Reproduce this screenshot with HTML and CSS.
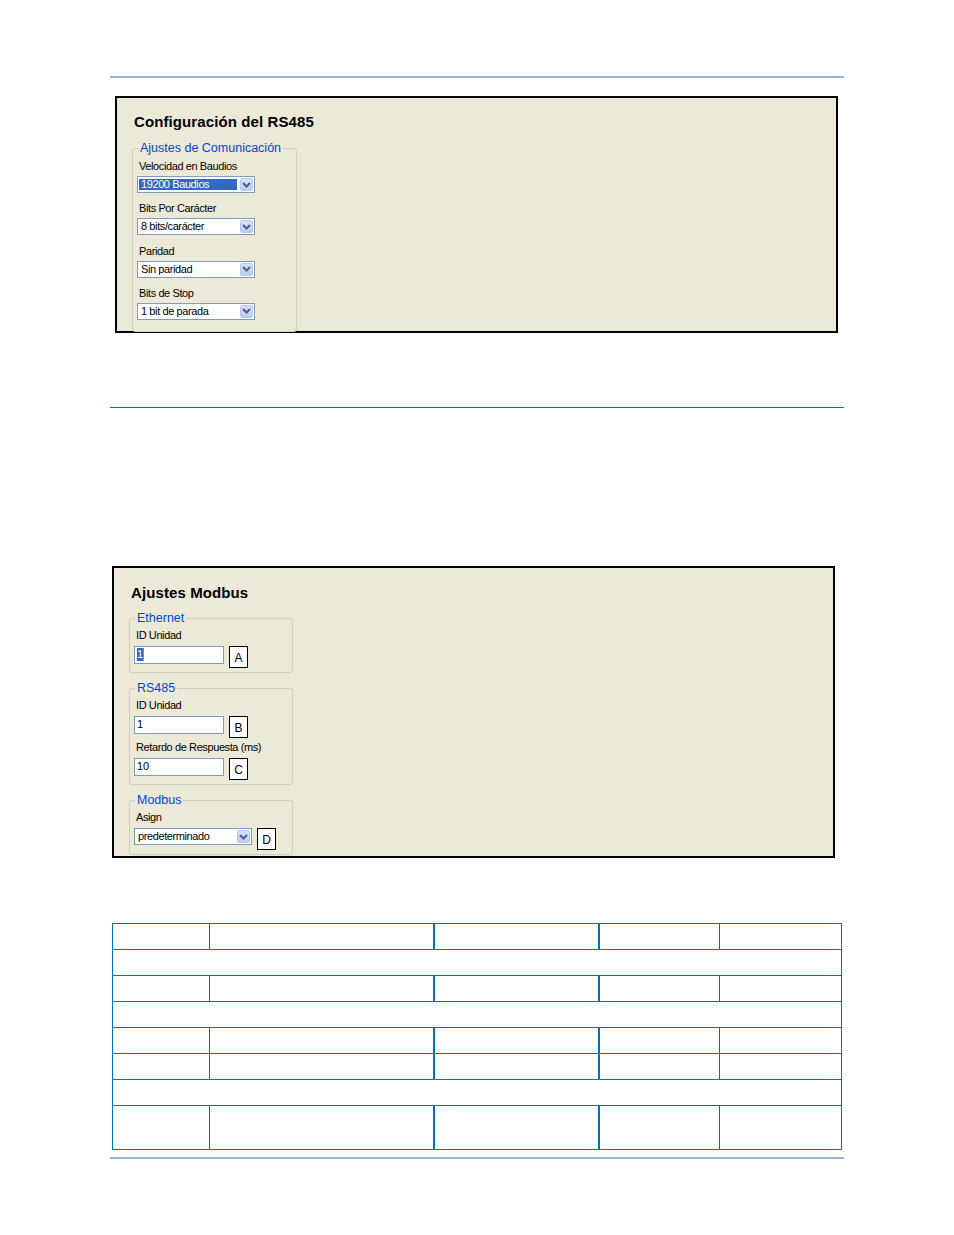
FILE: index.html
```html
<!DOCTYPE html>
<html lang="es">

<head>
    <meta charset="UTF-8">
    <meta name="viewport" content="width=device-width, initial-scale=1.0">
    <title>Configuración</title>
    <link rel="stylesheet" href="styles.css">
</head>

<body>
    <div class="page">
        <div class="rule-top"></div>

        <!-- Configuración del RS485 -->
        <div class="panel panel-rs485">
            <h2 class="panel-title">Configuración del RS485</h2>
            <fieldset class="group group-com">
                <legend>Ajustes de Comunicación</legend>
                <div class="field">
                    <div class="label">Velocidad en Baudios</div>
                    <div class="select">
                        <span class="select-text selected">19200 Baudios</span>
                        <span class="select-btn"><svg width="9" height="6" viewBox="0 0 9 6"><path d="M1 1l3.5 3.5L8 1" fill="none" stroke="#4d6185" stroke-width="2"/></svg></span>
                    </div>
                </div>
                <div class="field">
                    <div class="label">Bits Por Carácter</div>
                    <div class="select">
                        <span class="select-text">8 bits/carácter</span>
                        <span class="select-btn"><svg width="9" height="6" viewBox="0 0 9 6"><path d="M1 1l3.5 3.5L8 1" fill="none" stroke="#4d6185" stroke-width="2"/></svg></span>
                    </div>
                </div>
                <div class="field">
                    <div class="label">Paridad</div>
                    <div class="select">
                        <span class="select-text">Sin paridad</span>
                        <span class="select-btn"><svg width="9" height="6" viewBox="0 0 9 6"><path d="M1 1l3.5 3.5L8 1" fill="none" stroke="#4d6185" stroke-width="2"/></svg></span>
                    </div>
                </div>
                <div class="field last">
                    <div class="label">Bits de Stop</div>
                    <div class="select">
                        <span class="select-text">1 bit de parada</span>
                        <span class="select-btn"><svg width="9" height="6" viewBox="0 0 9 6"><path d="M1 1l3.5 3.5L8 1" fill="none" stroke="#4d6185" stroke-width="2"/></svg></span>
                    </div>
                </div>
            </fieldset>
        </div>

        <div class="rule-mid"></div>

        <!-- Ajustes Modbus -->
        <div class="panel panel-modbus">
            <h2 class="panel-title">Ajustes Modbus</h2>
            <fieldset class="group group-mb">
                <legend>Ethernet</legend>
                <div class="label">ID Unidad</div>
                <div class="row">
                    <div class="input"><span class="caret-sel">1</span></div>
                    <div class="tag">A</div>
                </div>
            </fieldset>
            <fieldset class="group group-mb">
                <legend>RS485</legend>
                <div class="label">ID Unidad</div>
                <div class="row">
                    <div class="input">1</div>
                    <div class="tag">B</div>
                </div>
                <div class="label">Retardo de Respuesta (ms)</div>
                <div class="row">
                    <div class="input">10</div>
                    <div class="tag">C</div>
                </div>
            </fieldset>
            <fieldset class="group group-mb">
                <legend>Modbus</legend>
                <div class="label">Asign</div>
                <div class="row">
                    <div class="select">
                        <span class="select-text">predeterminado</span>
                        <span class="select-btn"><svg width="9" height="6" viewBox="0 0 9 6"><path d="M1 1l3.5 3.5L8 1" fill="none" stroke="#4d6185" stroke-width="2"/></svg></span>
                    </div>
                    <div class="tag">D</div>
                </div>
            </fieldset>
        </div>

        <table class="grid">
            <colgroup>
                <col class="c1">
                <col class="c2">
                <col class="c3">
                <col class="c4">
                <col class="c5">
            </colgroup>
            <tr><td></td><td></td><td class="thick"></td><td class="thick"></td><td></td></tr>
            <tr><td colspan="5"></td></tr>
            <tr><td></td><td></td><td class="thick"></td><td class="thick"></td><td></td></tr>
            <tr><td colspan="5"></td></tr>
            <tr><td></td><td></td><td class="thick"></td><td class="thick"></td><td></td></tr>
            <tr><td></td><td></td><td class="thick"></td><td class="thick"></td><td></td></tr>
            <tr><td colspan="5"></td></tr>
            <tr class="tall"><td></td><td></td><td class="thick"></td><td class="thick"></td><td></td></tr>
        </table>

        <div class="rule-bottom"></div>
    </div>
</body>

</html>
```

FILE: styles.css
```css
body {
    margin: 0;
    background: #fff;
    font-family: "Liberation Sans", Arial, sans-serif;
    color: #000;
}

.page {
    width: 734px;
    margin-left: 110px;
    padding-bottom: 60px;
}

.rule-top,
.rule-bottom {
    height: 2px;
    background: #95b3d7;
}

.rule-top {
    margin-top: 76px;
}

.rule-mid {
    height: 1px;
    background: #0070c0;
    margin-top: 74px;
}

.rule-bottom {
    margin-top: 7px;
}

/* panels */
.panel {
    background: #ece9d8;
    border: 2px solid #000;
    box-sizing: border-box;
    width: 723px;
}

.panel-rs485 {
    margin: 18px 0 0 5px;
    height: 237px;
    padding: 15px 0 0 17px;
}

.panel-modbus {
    margin: 158px 0 0 2px;
    height: 292px;
    padding: 16px 0 0 17px;
}

.panel-title {
    margin: 0;
    font-size: 15px;
    line-height: 18px;
    font-weight: bold;
    letter-spacing: 0.1px;
}

/* group boxes */
.group {
    margin: 0;
    border: 1px solid #d0d0bf;
    border-radius: 3px;
    box-sizing: border-box;
    min-width: 0;
}

.group legend {
    padding: 0 2px;
    margin-left: 1px;
    font-size: 12.5px;
    line-height: 14px;
    color: #0046d5;
}

.group-com {
    width: 165px;
    margin: 10px 0 0 -2px;
    padding: 5px 0 11px 4px;
}

.group-mb {
    width: 164px;
    margin: 8px 0 0 -2px;
    padding: 4px 0 1px 4px;
}

.group-mb:first-of-type {
    margin-top: 9px;
}

.label {
    font-size: 11px;
    line-height: 13px;
    letter-spacing: -0.4px;
    padding-left: 2px;
    margin-bottom: 3px;
}

.group-mb .label {
    margin-bottom: 4px;
}

.field {
    margin-bottom: 9.3px;
}

.field.last {
    margin-bottom: 0;
}

/* combo boxes */
.select {
    display: flex;
    align-items: center;
    width: 118px;
    height: 17px;
    box-sizing: border-box;
    border: 1px solid #7f9db9;
    background: #fff;
    padding: 1px;
}

.select-text {
    flex: 1;
    font-size: 11px;
    line-height: 11px;
    letter-spacing: -0.4px;
    padding: 0 2px;
    margin-right: 3px;
    height: 11px;
    white-space: nowrap;
    overflow: hidden;
}

.select-text.selected {
    background: #316ac5;
    color: #fff;
}

.select-btn {
    width: 13px;
    height: 13px;
    box-sizing: border-box;
    border: 1px solid #b9c9ef;
    border-radius: 2px;
    background: linear-gradient(#d8e2fc, #bccbf4);
    display: flex;
    align-items: center;
    justify-content: center;
}

/* text boxes and tags */
.row {
    display: flex;
    align-items: flex-start;
    gap: 5px;
    margin-bottom: 3px;
}

.input {
    width: 90px;
    height: 18px;
    box-sizing: border-box;
    border: 1px solid #7f9db9;
    background: #fff;
    font-size: 11px;
    line-height: 15px;
    padding-left: 2px;
}

.caret-sel {
    display: inline-block;
    background: #316ac5;
    color: #fff;
    width: 6px;
    line-height: 13px;
    margin-top: 1px;
    border-right: 1px solid #e07a20;
}

.tag {
    width: 19px;
    height: 22px;
    box-sizing: border-box;
    border: 1px solid #000;
    background: #fff;
    font-size: 12px;
    line-height: 21px;
    text-align: center;
    padding-top: 1px;
}

/* blank table */
.grid {
    margin: 65px 0 0 2px;
    width: 730px;
    border-collapse: collapse;
    table-layout: fixed;
}

.grid td {
    border: 1px solid #0070c0;
    height: 25px;
    padding: 0;
}

.grid td.thick {
    border-left: 2px solid #0070c0;
}

.grid .tall td {
    height: 43px;
}

.c1 { width: 97px; }
.c2 { width: 224px; }
.c3 { width: 165px; }
.c4 { width: 121px; }
.c5 { width: 122px; }
```
